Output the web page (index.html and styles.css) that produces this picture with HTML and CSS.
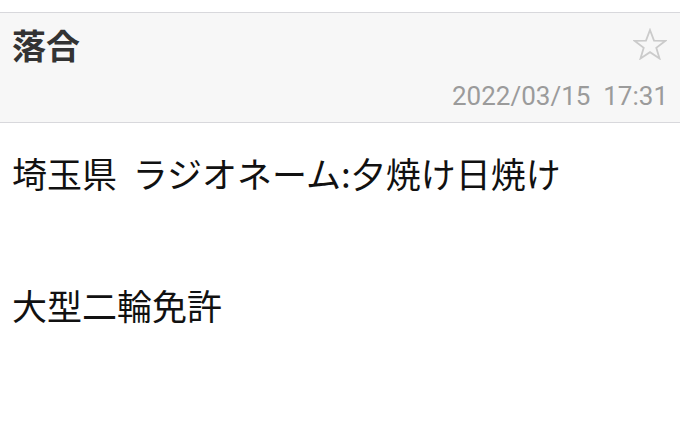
FILE: index.html
```html
<!DOCTYPE html>
<html lang="ja">
<head>
  <meta charset="UTF-8">
  <title>落合</title>
  <link rel="stylesheet" href="styles.css">
</head>
<body>
  <div class="top-strip"></div>

  <div class="mail-header">
    <div class="title-row">
      <h1 class="subject">落合</h1>
      <svg class="star" width="34" height="32" viewBox="0 0 34 32">
        <polygon points="17,2 21,12.6 32.2,12.9 23.3,19.8 26.5,30.5 17,24.2 7.5,30.5 10.7,19.8 1.8,12.9 13,12.6"
          fill="none" stroke="#cbcbcb" stroke-width="1.8" stroke-linejoin="miter"/>
      </svg>
    </div>
    <div class="date">2022/03/15&nbsp;&nbsp;17:31</div>
  </div>

  <div class="mail-body">
    埼玉県&nbsp;&nbsp;ラジオネーム:夕焼け日焼け<br>
    <br>
    <br>
    大型二輪免許
  </div>
</body>
</html>
```

FILE: styles.css
```css
body {
  margin: 0;
  background: #fff;
  font-family: "Noto Sans CJK JP", "Noto Sans", sans-serif;
  width: 680px;
  height: 422px;
  overflow: hidden;
}

.top-strip {
  height: 12px;
  background: #fff;
}

.mail-header {
  background: #f7f7f7;
  border-top: 1px solid #d8d8dc;
  border-bottom: 1px solid #d8d8dc;
  height: 109px;
  padding: 0 12px;
}

.title-row {
  display: flex;
  justify-content: space-between;
  align-items: flex-start;
  padding-top: 10px;
}

.subject {
  margin: 0;
  font-size: 34px;
  line-height: 44px;
  font-weight: bold;
  color: #333;
}

.star {
  margin-top: 5px;
  margin-right: 1px;
}

.date {
  text-align: right;
  font-family: Roboto, "Noto Sans", sans-serif;
  font-size: 26px;
  line-height: 30px;
  color: #9b9b9b;
  margin-top: 14px;
}

.mail-body {
  padding: 12px;
  padding-top: 28px;
  font-size: 35px;
  line-height: 44px;
  color: #111;
}
```
